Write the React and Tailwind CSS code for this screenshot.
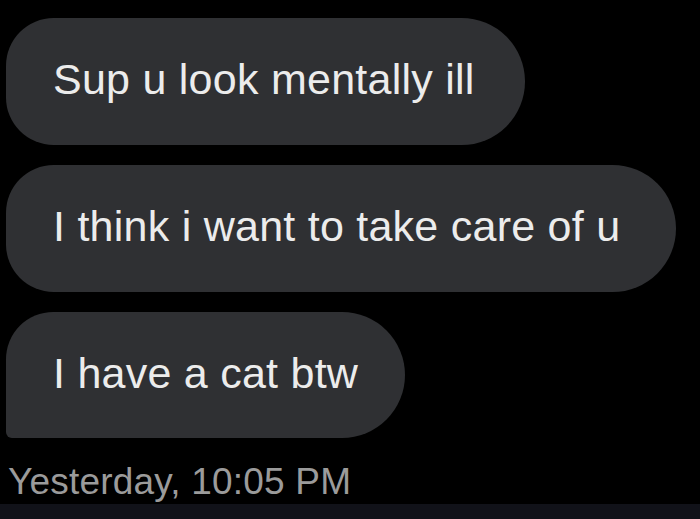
export default function App() {
  const font = { fontFamily: '"Liberation Sans", Arial, sans-serif' };

  return (
    <div className="w-[700px] h-[519px] bg-black flex flex-col overflow-hidden" style={font}>
      <div className="flex-1 flex flex-col items-start gap-[20px] pt-[18px] pl-[6px]">
        <div className="h-[127px] flex items-center pl-[47px] pr-[50px] bg-[#2f3033] rounded-r-[64px] rounded-l-[48px]">
          <span className="text-[43px] text-[#ececec] leading-none tracking-[0.25px] -mt-[4px]">Sup u look mentally ill</span>
        </div>
        <div className="h-[127px] flex items-center pl-[47px] pr-[56px] bg-[#2f3033] rounded-r-[64px] rounded-l-[48px]">
          <span className="text-[43px] text-[#ececec] leading-none tracking-[0.25px] -mt-[4px]">I think i want to take care of u</span>
        </div>
        <div className="h-[126px] flex items-center pl-[47px] pr-[47px] bg-[#2f3033] rounded-r-[64px] rounded-tl-[48px] rounded-bl-[6px]">
          <span className="text-[43px] text-[#ececec] leading-none tracking-[0.25px] -mt-[4px]">I have a cat btw</span>
        </div>
        <div className="pl-[2px] mt-[5px]">
          <span className="text-[37px] text-[#9b9b9b] leading-none tracking-[0.2px]">Yesterday, 10:05 PM</span>
        </div>
      </div>
      <div className="h-[15px] bg-[#111219]" />
    </div>
  );
}
